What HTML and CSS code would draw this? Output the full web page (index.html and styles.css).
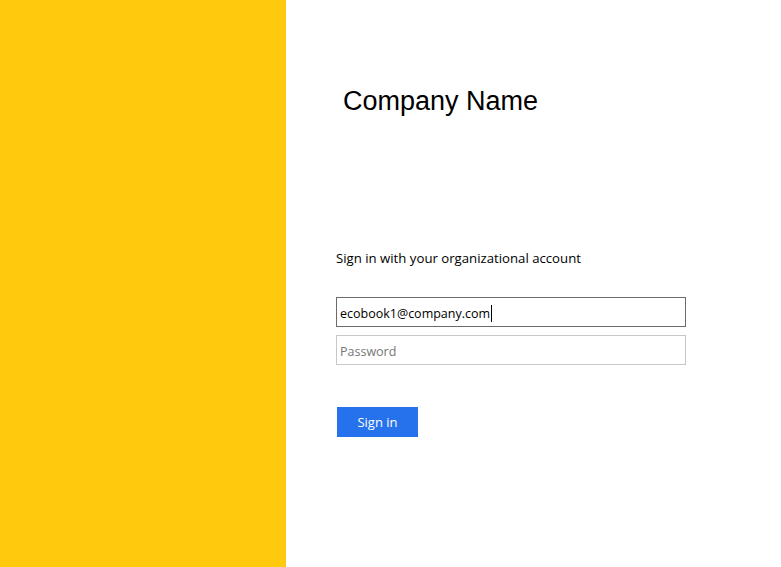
FILE: index.html
```html
<!DOCTYPE html>
<html>
<head>
<meta charset="utf-8">
<link rel="stylesheet" href="styles.css">
</head>
<body>
<div class="page">
  <div class="illustration"></div>
  <div class="content">
    <div class="company">Company Name</div>
    <div class="intro">Sign in with your organizational account</div>
    <div class="field field-active">ecobook1@company.com<span class="caret"></span></div>
    <div class="field field-empty">Password</div>
    <div class="submit-row">
      <div class="btn">Sign in</div>
    </div>
  </div>
</div>
</body>
</html>
```

FILE: styles.css
```css
html, body {
  margin: 0;
  padding: 0;
  background: #ffffff;
}
.page {
  display: flex;
  width: 781px;
  height: 567px;
  overflow: hidden;
}
.illustration {
  width: 286px;
  flex: none;
  background: #ffc90e;
}
.content {
  flex: 1;
  padding-left: 50px;
  padding-top: 84px;
  font-family: "Open Sans", "DejaVu Sans", sans-serif;
  color: #000;
}
.company {
  font-family: "Liberation Sans", Arial, sans-serif;
  font-size: 27px;
  line-height: 34px;
  margin-left: 7px;
  color: #000;
}
.intro {
  margin-top: 131px;
  font-size: 13.2px;
  line-height: 19px;
  color: #000;
}
.field {
  box-sizing: border-box;
  width: 350px;
  height: 30px;
  margin-top: 29px;
  padding-left: 3px;
  padding-top: 2px;
  font-size: 12.5px;
  display: flex;
  align-items: center;
}
.field-active {
  border: 1px solid #6b6b6b;
  color: #000;
}
.caret {
  display: inline-block;
  width: 1px;
  height: 17px;
  background: #000;
  margin-left: 1px;
}
.field-empty {
  margin-top: 8px;
  border: 1px solid #c8c8c8;
  color: #777;
}
.submit-row {
  margin-top: 42px;
  padding-left: 1px;
}
.btn {
  display: inline-flex;
  align-items: center;
  justify-content: center;
  width: 81px;
  height: 30px;
  background: #2672ec;
  color: #fff;
  font-size: 13px;
}
```
